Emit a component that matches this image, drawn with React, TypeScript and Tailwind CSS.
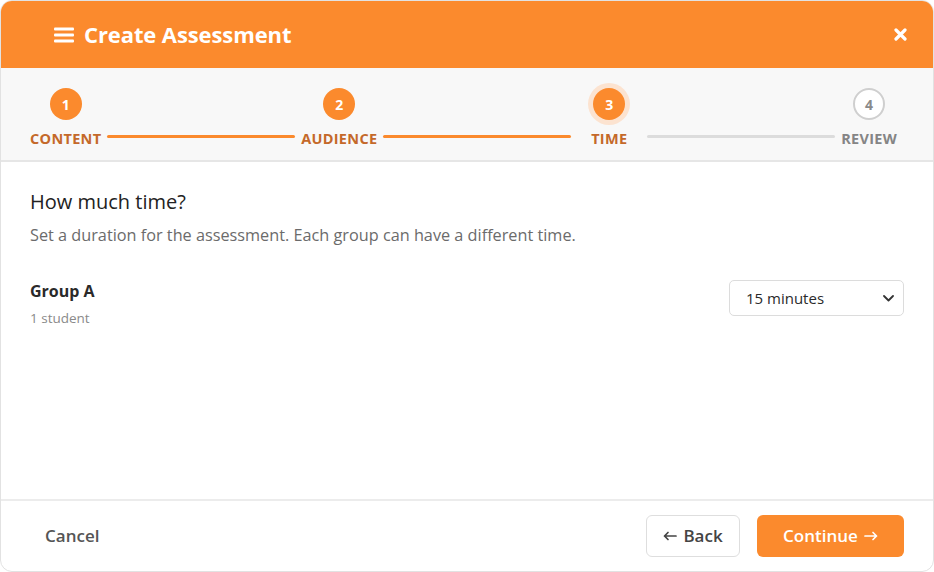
import React, { useState } from "react";

const steps = [
  { n: 1, label: "CONTENT", state: "done" },
  { n: 2, label: "AUDIENCE", state: "done" },
  { n: 3, label: "TIME", state: "current" },
  { n: 4, label: "REVIEW", state: "todo" },
];

function StepCircle({ n, state }: { n: number; state: string }) {
  if (state === "todo") {
    return (
      <div className="h-8 w-8 rounded-full border-2 border-[#cfcfcf] bg-white flex items-center justify-center text-[14px] font-bold text-[#8a8a8a]">
        {n}
      </div>
    );
  }
  return (
    <div
      className={`h-8 w-8 rounded-full bg-[#fb8a2d] flex items-center justify-center text-[14px] font-bold text-white ${
        state === "current" ? "ring-[5px] ring-[#fce3d0]" : ""
      }`}
    >
      {n}
    </div>
  );
}

function Arrow({ dir }: { dir: "left" | "right" }) {
  return (
    <svg width="14" height="10" viewBox="0 0 14 10" className="inline-block">
      {dir === "left" ? (
        <path
          d="M13 5 H1.5 M5 1.5 L1.5 5 L5 8.5"
          fill="none"
          stroke="currentColor"
          strokeWidth="1.7"
          strokeLinecap="round"
          strokeLinejoin="round"
        />
      ) : (
        <path
          d="M1 5 H12.5 M9 1.5 L12.5 5 L9 8.5"
          fill="none"
          stroke="currentColor"
          strokeWidth="1.7"
          strokeLinecap="round"
          strokeLinejoin="round"
        />
      )}
    </svg>
  );
}

export default function App() {
  const [duration, setDuration] = useState("15");

  return (
    <div
      className="w-[934px] h-[572px] bg-white"
      style={{ fontFamily: '"Open Sans", "Liberation Sans", sans-serif' }}
    >
      <div className="h-full flex flex-col rounded-[12px] border border-[#e2e2e2] overflow-hidden">
        {/* header */}
        <div className="h-[67px] shrink-0 bg-[#fb8a2d] flex items-center pl-[53px] pr-[26px]">
          <svg width="20" height="16" viewBox="0 0 20 16" className="mr-[10px]">
            <rect x="0" y="0.5" width="20" height="3" rx="1" fill="white" />
            <rect x="0" y="6.5" width="20" height="3" rx="1" fill="white" />
            <rect x="0" y="12.5" width="20" height="3" rx="1" fill="white" />
          </svg>
          <h1 className="text-[22px] font-bold text-white tracking-[-0.1px]">
            Create Assessment
          </h1>
          <button className="ml-auto text-white">
            <svg width="13" height="13" viewBox="0 0 13 13">
              <path
                d="M2 2 L11 11 M11 2 L2 11"
                stroke="white"
                strokeWidth="3.2"
                strokeLinecap="round"
              />
            </svg>
          </button>
        </div>

        {/* stepper */}
        <div className="h-[94px] shrink-0 bg-[#f8f8f8] border-b-2 border-[#e6e6e6] flex items-start pl-[29px] pr-[36px] pt-[20px]">
          {steps.map((s, i) => (
            <React.Fragment key={s.n}>
              {i > 0 && (
                <div
                  className={`flex-1 h-[3px] mx-[6px] mt-[47px] rounded-full ${
                    s.state === "todo" ? "bg-[#dcdcdc]" : "bg-[#fb8a2d]"
                  }`}
                />
              )}
              <div
                className={`flex flex-col items-center gap-[9px] ${
                  s.state === "current" ? "px-[14px]" : ""
                }`}
              >
                <StepCircle n={s.n} state={s.state} />
                <span
                  className={`text-[14.5px] font-bold leading-[20px] tracking-[0.3px] ${
                    s.state === "todo" ? "text-[#858585]" : "text-[#c4692a]"
                  }`}
                >
                  {s.label}
                </span>
              </div>
            </React.Fragment>
          ))}
        </div>

        {/* body */}
        <div className="flex-1 px-[29px] pt-[27px]">
          <h2 className="text-[20px] text-[#222] leading-[26px]">How much time?</h2>
          <p className="mt-[10px] text-[16.25px] text-[#6b6b6b] leading-[20px]">
            Set a duration for the assessment. Each group can have a different time.
          </p>
          <div className="mt-[35px] flex items-start justify-between">
            <div>
              <div className="text-[16px] font-bold text-[#2a2a2a] leading-[22px]">
                Group A
              </div>
              <div className="mt-[7px] text-[13.5px] text-[#8a8a8a] leading-[18px]">
                1 student
              </div>
            </div>
            <div className="relative w-[175px]">
              <select
                value={duration}
                onChange={(e) => setDuration(e.target.value)}
                className="appearance-none w-full h-[36px] rounded-[5px] border border-[#dcdcdc] bg-white pl-[16px] pr-8 text-[15px] text-[#2a2a2a] outline-none"
                style={{ fontFamily: '"Open Sans", "Liberation Sans", sans-serif' }}
              >
                <option value="5">5 minutes</option>
                <option value="10">10 minutes</option>
                <option value="15">15 minutes</option>
                <option value="30">30 minutes</option>
              </select>
              <svg
                width="11"
                height="7"
                viewBox="0 0 11 7"
                className="absolute right-[10px] top-[15px] pointer-events-none"
              >
                <path
                  d="M1 1 L5.5 5.5 L10 1"
                  fill="none"
                  stroke="#333"
                  strokeWidth="1.8"
                  strokeLinecap="round"
                  strokeLinejoin="round"
                />
              </svg>
            </div>
          </div>
        </div>

        {/* footer */}
        <div className="h-[72px] shrink-0 border-t-2 border-[#ececec] flex items-center pl-[44px] pr-[29px]">
          <button className="text-[17px] font-semibold text-[#555]">Cancel</button>
          <div className="ml-auto flex items-center gap-[17px]">
            <button className="h-[42px] w-[94px] rounded-[6px] border border-[#dedede] bg-white text-[17px] font-semibold text-[#444] flex items-center justify-center gap-[6px]">
              <Arrow dir="left" />
              Back
            </button>
            <button className="h-[42px] w-[147px] rounded-[6px] bg-[#fb8a2d] text-[17px] font-semibold text-white flex items-center justify-center gap-[6px]">
              Continue
              <Arrow dir="right" />
            </button>
          </div>
        </div>
      </div>
    </div>
  );
}
